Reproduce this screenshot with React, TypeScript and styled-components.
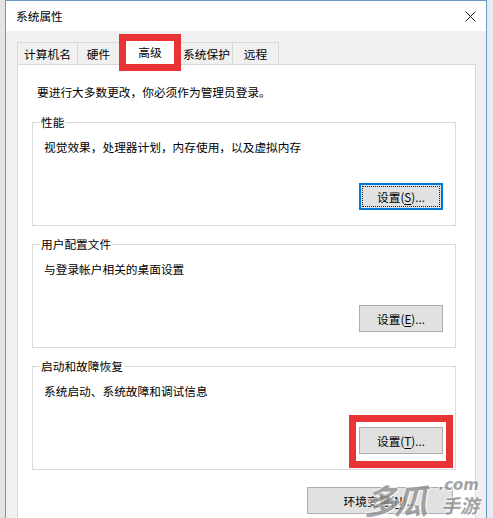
import React from "react";
import styled, { createGlobalStyle } from "styled-components";

const Global = createGlobalStyle`
  html, body { margin: 0; padding: 0; }
  body {
    background: #e8eaed;
    font-family: "Noto Sans CJK SC", "Microsoft YaHei", sans-serif;
    font-size: 11.7px;
    color: #000;
    overflow: hidden;
  }
`;

const Screen = styled.div`
  position: relative;
  width: 493px;
  height: 518px;
  overflow: hidden;
  display: flex;
  padding-left: 5px;
  box-sizing: border-box;
  background: linear-gradient(90deg, #e4e4e4 0 5px, #e9ecef 5px);
`;

const Dialog = styled.div`
  width: 482px;
  height: 540px;
  box-sizing: border-box;
  border: 1px solid #6a96c4;
  display: flex;
  flex-direction: column;
  background: #f0f0f0;
`;

const TitleBar = styled.div`
  height: 30px;
  flex: none;
  background: #fff;
  display: flex;
  align-items: center;
  justify-content: space-between;
  padding: 0 10px;
  line-height: 16px;
`;

const Body = styled.div`
  flex: 1;
  display: flex;
  flex-direction: column;
  padding: 9px 10px 0 11px;
`;

const TabStrip = styled.div`
  display: flex;
  align-items: flex-end;
  height: 24px;
  position: relative;
  z-index: 1;
`;

const Tab = styled.div<{ $w: number; $active?: boolean }>`
  position: relative;
  box-sizing: border-box;
  width: ${(p) => p.$w}px;
  height: ${(p) => (p.$active ? 25 : 22)}px;
  margin-bottom: ${(p) => (p.$active ? -1 : 0)}px;
  border: 1px solid #d9d9d9;
  border-bottom: none;
  background: ${(p) => (p.$active ? "#fff" : "#f0f0f0")};
  display: flex;
  align-items: flex-start;
  justify-content: center;
  padding-top: ${(p) => (p.$active ? 3 : 3)}px;
  line-height: 16px;
  & + & { margin-left: -1px; }
`;

const Highlight = styled.div<{ $t: number; $r: number; $b: number; $l: number }>`
  position: absolute;
  top: ${(p) => p.$t}px;
  right: ${(p) => p.$r}px;
  bottom: ${(p) => p.$b}px;
  left: ${(p) => p.$l}px;
  border: 7px solid #ea3337;
  pointer-events: none;
  z-index: 3;
`;

const Panel = styled.div`
  flex: 1;
  background: #fff;
  border: 1px solid #d9d9d9;
  display: flex;
  flex-direction: column;
  padding: 19px 19px 0 14px;
`;

const Intro = styled.div`
  line-height: 16px;
  padding-left: 5px;
  margin-bottom: 14px;
`;

const Group = styled.fieldset`
  margin: 0 0 10px 0;
  padding: 9px 12px 15px 7px;
  border: 1px solid #dcdcdc;
  display: flex;
  flex-direction: column;
  min-width: 0;
`;

const Legend = styled.legend`
  padding: 0 1px;
  line-height: 16px;
`;

const Desc = styled.div`
  line-height: 16px;
  padding-left: 4px;
  margin-bottom: 28px;
`;

const ButtonSlot = styled.div`
  position: relative;
  align-self: flex-end;
`;

const Button = styled.button<{ $default?: boolean; $w?: number }>`
  box-sizing: border-box;
  width: ${(p) => p.$w ?? 84}px;
  height: 27px;
  padding: 0;
  background: #e1e1e1;
  border: 1px solid ${(p) => (p.$default ? "#0078d7" : "#adadad")};
  box-shadow: ${(p) => (p.$default ? "inset 0 0 0 1px #0078d7" : "none")};
  outline: ${(p) => (p.$default ? "1px dotted #222" : "none")};
  outline-offset: -4px;
  font-family: inherit;
  font-size: 11.7px;
  line-height: 16px;
  color: #000;
  display: flex;
  align-items: center;
  justify-content: center;
  u { text-decoration: underline; text-underline-offset: 2px; }
`;

const Footer = styled.div`
  display: flex;
  justify-content: flex-end;
  margin-top: 7px;
  padding-right: 3px;
`;

const Watermark = styled.div`
  position: absolute;
  right: 14px;
  bottom: -2px;
  width: 115px;
  height: 42px;
  opacity: 0.78;
  pointer-events: none;
  font-family: "DejaVu Sans", sans-serif;
  font-weight: bold;
  font-style: italic;
  color: #8c8c8c;
  text-shadow: 1px 0 0 #fff, -1px 0 0 #fff, 0 1px 0 #fff, 0 -1px 0 #fff, 1px 1px 0 #fff;
`;

const WmBig = styled.span`
  position: absolute;
  left: 0;
  bottom: 0;
  font-family: "Noto Sans CJK SC", sans-serif;
  font-size: 34px;
  line-height: 40px;
  letter-spacing: -4px;
  color: #909090;
`;

const WmCom = styled.span`
  position: absolute;
  right: 0;
  top: -2px;
  font-size: 15px;
  line-height: 18px;
`;

const WmSmall = styled.span`
  position: absolute;
  right: 0;
  bottom: 4px;
  font-family: "Noto Sans CJK SC", sans-serif;
  font-size: 19px;
  line-height: 22px;
`;

const CloseIcon = () => (
  <svg width="11" height="11" viewBox="0 0 11 11">
    <path d="M0.5 0.5 L10.5 10.5 M10.5 0.5 L0.5 10.5" stroke="#111" strokeWidth="1" fill="none" />
  </svg>
);

const tabs = [
  { label: "计算机名", w: 61 },
  { label: "硬件", w: 43 },
  { label: "高级", w: 62, active: true },
  { label: "系统保护", w: 53 },
  { label: "远程", w: 47 },
];

const Label = ({ text, k }: { text: string; k: string }) => (
  <span>
    {text}(<u>{k}</u>)...
  </span>
);

export default function App() {
  return (
    <>
      <Global />
      <Screen>
        <Dialog>
          <TitleBar>
            <span>系统属性</span>
            <CloseIcon />
          </TitleBar>
          <Body>
            <TabStrip>
              {tabs.map((t) => (
                <Tab key={t.label} $w={t.w} $active={t.active}>
                  {t.label}
                  {t.active && <Highlight $t={-7} $r={-1} $b={-6} $l={-1} />}
                </Tab>
              ))}
            </TabStrip>
            <Panel>
              <Intro>要进行大多数更改，你必须作为管理员登录。</Intro>
              <Group>
                <Legend>性能</Legend>
                <Desc>视觉效果，处理器计划，内存使用，以及虚拟内存</Desc>
                <ButtonSlot>
                  <Button $default>
                    <Label text="设置" k="S" />
                  </Button>
                </ButtonSlot>
              </Group>
              <Group>
                <Legend>用户配置文件</Legend>
                <Desc>与登录帐户相关的桌面设置</Desc>
                <ButtonSlot>
                  <Button>
                    <Label text="设置" k="E" />
                  </Button>
                </ButtonSlot>
              </Group>
              <Group>
                <Legend>启动和故障恢复</Legend>
                <Desc>系统启动、系统故障和调试信息</Desc>
                <ButtonSlot>
                  <Button>
                    <Label text="设置" k="T" />
                  </Button>
                  <Highlight $t={-12} $r={-10} $b={-14} $l={-10} />
                </ButtonSlot>
              </Group>
              <Footer>
                <Button $w={146}>
                  <Label text="环境变量" k="N" />
                </Button>
              </Footer>
            </Panel>
          </Body>
        </Dialog>
        <Watermark>
          <WmBig>多瓜</WmBig>
          <WmCom>.com</WmCom>
          <WmSmall>手游</WmSmall>
        </Watermark>
      </Screen>
    </>
  );
}
